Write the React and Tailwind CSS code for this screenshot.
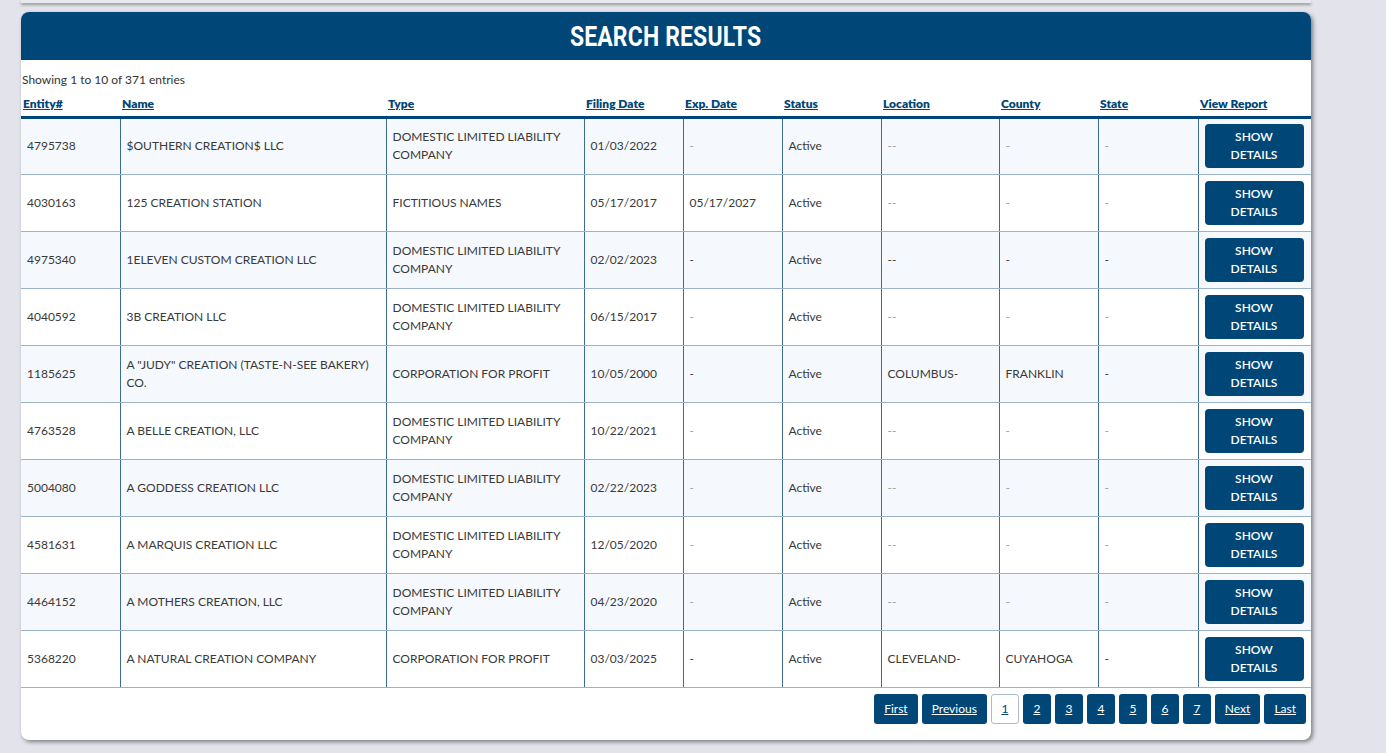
import React from "react";

const rows = [
  { id: "4795738", name: "$OUTHERN CREATION$ LLC", type: "DOMESTIC LIMITED LIABILITY COMPANY", filed: "01/03/2022", exp: "-", loc: "--", county: "-", state: "-", dark: false },
  { id: "4030163", name: "125 CREATION STATION", type: "FICTITIOUS NAMES", filed: "05/17/2017", exp: "05/17/2027", loc: "--", county: "-", state: "-", dark: false },
  { id: "4975340", name: "1ELEVEN CUSTOM CREATION LLC", type: "DOMESTIC LIMITED LIABILITY COMPANY", filed: "02/02/2023", exp: "-", loc: "--", county: "-", state: "-", dark: true },
  { id: "4040592", name: "3B CREATION LLC", type: "DOMESTIC LIMITED LIABILITY COMPANY", filed: "06/15/2017", exp: "-", loc: "--", county: "-", state: "-", dark: false },
  { id: "1185625", name: 'A "JUDY" CREATION (TASTE-N-SEE BAKERY) CO.', type: "CORPORATION FOR PROFIT", filed: "10/05/2000", exp: "-", loc: "COLUMBUS-", county: "FRANKLIN", state: "-", dark: true },
  { id: "4763528", name: "A BELLE CREATION, LLC", type: "DOMESTIC LIMITED LIABILITY COMPANY", filed: "10/22/2021", exp: "-", loc: "--", county: "-", state: "-", dark: false },
  { id: "5004080", name: "A GODDESS CREATION LLC", type: "DOMESTIC LIMITED LIABILITY COMPANY", filed: "02/22/2023", exp: "-", loc: "--", county: "-", state: "-", dark: false },
  { id: "4581631", name: "A MARQUIS CREATION LLC", type: "DOMESTIC LIMITED LIABILITY COMPANY", filed: "12/05/2020", exp: "-", loc: "--", county: "-", state: "-", dark: false },
  { id: "4464152", name: "A MOTHERS CREATION, LLC", type: "DOMESTIC LIMITED LIABILITY COMPANY", filed: "04/23/2020", exp: "-", loc: "--", county: "-", state: "-", dark: false },
  { id: "5368220", name: "A NATURAL CREATION COMPANY", type: "CORPORATION FOR PROFIT", filed: "03/03/2025", exp: "-", loc: "CLEVELAND-", county: "CUYAHOGA", state: "-", dark: true },
];

const headers = ["Entity#", "Name", "Type", "Filing Date", "Exp. Date", "Status", "Location", "County", "State", "View Report"];
const widths = [99, 266, 198, 99, 99, 99, 118, 99, 100, 113];

const pages = ["First", "Previous", "1", "2", "3", "4", "5", "6", "7", "Next", "Last"];

function Cell({ children, dim }) {
  return (
    <td
      className={
        "px-[6px] align-middle border-b border-[#9ab3cb] border-r border-r-[#3f6b93] " +
        (dim ? "text-[#a0a0a0]" : "text-[#3a3a3a]")
      }
    >
      {children}
    </td>
  );
}

export default function App() {
  return (
    <div className="min-h-screen bg-[#e3e3eb] font-['Lato','Noto_Sans',sans-serif] pb-[13px]">
      <div className="ml-[21px] w-[1290px] h-[3px] bg-[#e9e9f0] shadow-[0_2px_3px_rgba(0,0,0,0.35)]"></div>
      <div className="ml-[21px] mt-[9px] w-[1290px] bg-white rounded-[8px] shadow-[2px_2px_4px_rgba(0,0,0,0.45)] overflow-hidden">
        <div className="h-[48px] bg-[#004676] flex items-center justify-center">
          <span className="inline-block scale-x-85 text-white font-['Roboto',sans-serif] font-bold text-[27px] leading-none tracking-[0.2px] translate-y-[1px]">
            SEARCH RESULTS
          </span>
        </div>
        <div className="pt-[12px] pl-[1px] text-[12px] leading-[15px] text-[#333]">Showing 1 to 10 of 371 entries</div>
        <table className="w-[1290px] table-fixed border-collapse text-[12px] leading-[18px]">
          <colgroup>
            {widths.map((w, i) => (
              <col key={i} style={{ width: w }} />
            ))}
          </colgroup>
          <thead>
            <tr className="border-b-[3px] border-[#004676]">
              {headers.map((h) => (
                <th key={h} className="h-[30px] pl-[2px] pb-[3px] align-bottom text-left font-extrabold text-[#004676] underline">
                  {h}
                </th>
              ))}
            </tr>
          </thead>
          <tbody>
            {rows.map((r, i) => {
              const d = !r.dark;
              return (
                <tr key={r.id} className={"h-[57px] " + (i % 2 === 0 ? "bg-[#f5f8fc]" : "bg-white")}>
                  <Cell>{r.id}</Cell>
                  <Cell>{r.name}</Cell>
                  <Cell>{r.type}</Cell>
                  <Cell>{r.filed}</Cell>
                  <Cell dim={r.exp === "-" && d}>{r.exp}</Cell>
                  <Cell>Active</Cell>
                  <Cell dim={r.loc === "--" && d}>{r.loc}</Cell>
                  <Cell dim={r.county === "-" && d}>{r.county}</Cell>
                  <Cell dim={d}>{r.state}</Cell>
                  <td className="border-b border-[#9ab3cb] pl-[6px] align-middle">
                    <button className="w-[99px] h-[44px] rounded-[4px] bg-[#004676] text-white text-[12px] font-semibold leading-[18px]">
                      SHOW
                      <br />
                      DETAILS
                    </button>
                  </td>
                </tr>
              );
            })}
          </tbody>
        </table>
        <div className="flex justify-end gap-[4px] pr-[5px] pt-[6px] pb-[16px]">
          {pages.map((p) => {
            const active = p === "1";
            const num = p.length === 1;
            return (
              <button
                key={p}
                className={
                  "h-[30px] rounded-[3px] text-[12px] underline flex items-center justify-center " +
                  (num ? "w-[28px] " : "px-[10px] ") +
                  (active ? "bg-white text-[#004676] border border-[#a9bccd]" : "bg-[#004676] text-white")
                }
              >
                {p}
              </button>
            );
          })}
        </div>
      </div>
    </div>
  );
}
